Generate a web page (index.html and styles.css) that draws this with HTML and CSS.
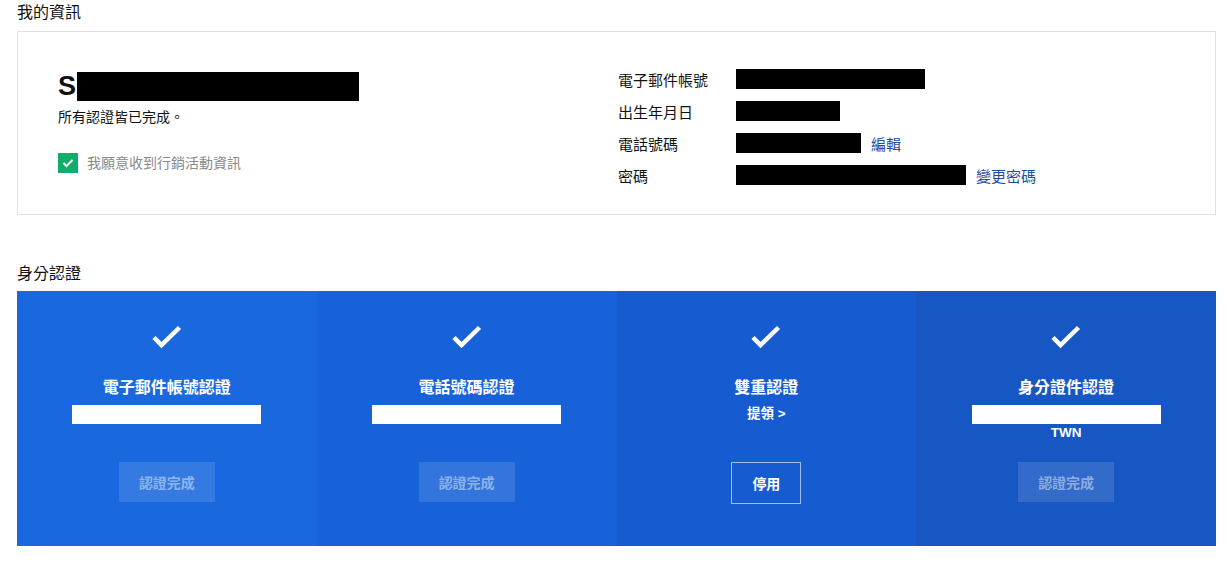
FILE: index.html
```html
<!DOCTYPE html>
<html lang="zh-Hant">
<head>
    <meta charset="UTF-8">
    <meta name="viewport" content="width=device-width, initial-scale=1.0">
    <title>我的資訊</title>
    <link rel="stylesheet" href="styles.css">
</head>
<body>

<div class="page">
    <h3 class="section-title">我的資訊</h3>
    <div class="info-box">
        <div class="info-left">
            <div class="user-name">S<span class="mask mask-name"></span></div>
            <p class="verify-note">所有認證皆已完成。</p>
            <label class="marketing">
                <span class="checkbox">
                    <svg width="12" height="10" viewBox="0 0 12 10"><path d="M1.5 5 L4.5 8 L10.5 2" fill="none" stroke="#fff" stroke-width="2"/></svg>
                </span>
                我願意收到行銷活動資訊
            </label>
        </div>
        <div class="info-right">
            <div class="info-row">
                <span class="info-label">電子郵件帳號</span>
                <span class="mask" style="width:189px"></span>
            </div>
            <div class="info-row">
                <span class="info-label">出生年月日</span>
                <span class="mask" style="width:104px"></span>
            </div>
            <div class="info-row">
                <span class="info-label">電話號碼</span>
                <span class="mask" style="width:125px"></span>
                <a class="info-link" href="#">編輯</a>
            </div>
            <div class="info-row">
                <span class="info-label">密碼</span>
                <span class="mask" style="width:230px"></span>
                <a class="info-link" href="#">變更密碼</a>
            </div>
        </div>
    </div>

    <h3 class="section-title section-title-2">身分認證</h3>
    <div class="verify-panel">
        <div class="verify-col col-1">
            <svg class="check" width="32" height="24" viewBox="0 0 32 24"><path d="M3 12.5 L10.5 20 L28.5 2.5" fill="none" stroke="#fff" stroke-width="4.5"/></svg>
            <div class="verify-title">電子郵件帳號認證</div>
            <div class="verify-detail">
                <span class="white-bar"></span>
            </div>
            <button class="btn-done">認證完成</button>
        </div>
        <div class="verify-col col-2">
            <svg class="check" width="32" height="24" viewBox="0 0 32 24"><path d="M3 12.5 L10.5 20 L28.5 2.5" fill="none" stroke="#fff" stroke-width="4.5"/></svg>
            <div class="verify-title">電話號碼認證</div>
            <div class="verify-detail">
                <span class="white-bar"></span>
            </div>
            <button class="btn-done">認證完成</button>
        </div>
        <div class="verify-col col-3">
            <svg class="check" width="32" height="24" viewBox="0 0 32 24"><path d="M3 12.5 L10.5 20 L28.5 2.5" fill="none" stroke="#fff" stroke-width="4.5"/></svg>
            <div class="verify-title">雙重認證</div>
            <div class="verify-detail">
                <a class="withdraw" href="#">提領 &gt;</a>
            </div>
            <button class="btn-outline">停用</button>
        </div>
        <div class="verify-col col-4">
            <svg class="check" width="32" height="24" viewBox="0 0 32 24"><path d="M3 12.5 L10.5 20 L28.5 2.5" fill="none" stroke="#fff" stroke-width="4.5"/></svg>
            <div class="verify-title">身分證件認證</div>
            <div class="verify-detail">
                <span class="white-bar"></span>
                <span class="country">TWN</span>
            </div>
            <button class="btn-done">認證完成</button>
        </div>
    </div>
</div>

</body>
</html>
```

FILE: styles.css
```css
body {
    font-family: 'Liberation Sans', 'Noto Sans CJK TC', sans-serif;
    background-color: #ffffff;
    color: #111111;
    margin: 0;
}
.page {
    width: 1199px;
    padding: 0 17px;
}
.section-title {
    margin: 0;
    padding-top: 3px;
    height: 28px;
    font-size: 16px;
    font-weight: normal;
    line-height: 20px;
}
.section-title-2 {
    margin-top: 47px;
    padding-top: 2px;
    height: 27px;
}
.info-box {
    display: flex;
    height: 182px;
    border: 1px solid #e2e2e2;
    padding: 0 40px;
}
.info-left {
    width: 560px;
    padding-top: 39px;
}
.user-name {
    display: flex;
    align-items: center;
    height: 30px;
    font-size: 27px;
    font-weight: bold;
    line-height: 30px;
}
.mask {
    display: inline-block;
    height: 20px;
    background-color: #000000;
}
.mask-name {
    width: 282px;
    height: 29px;
    margin-left: 1px;
}
.verify-note {
    margin: 6px 0 0;
    font-size: 14px;
    line-height: 20px;
}
.marketing {
    display: flex;
    align-items: center;
    gap: 9px;
    margin-top: 26px;
    font-size: 14px;
    line-height: 20px;
    color: #8a8a8a;
}
.checkbox {
    display: flex;
    align-items: center;
    justify-content: center;
    width: 20px;
    height: 20px;
    background-color: #10ad6b;
}
.info-right {
    padding-top: 31px;
}
.info-row {
    display: flex;
    align-items: center;
    height: 32px;
    font-size: 15px;
}
.info-label {
    width: 118px;
}
.info-link {
    margin-left: 10px;
    color: #1b4da3;
    text-decoration: none;
}
.verify-panel {
    display: flex;
    height: 255px;
}
.verify-col {
    flex: 1;
    display: flex;
    flex-direction: column;
    align-items: center;
    padding-top: 34px;
    color: #ffffff;
}
.col-1 { background-color: #1a68dd; }
.col-2 { background-color: #1862d9; }
.col-3 { background-color: #165bcf; }
.col-4 { background-color: #1657c3; }
.check {
    display: block;
}
.verify-title {
    margin-top: 28px;
    font-size: 16px;
    font-weight: bold;
    line-height: 22px;
}
.verify-detail {
    display: flex;
    flex-direction: column;
    align-items: center;
    height: 63px;
    padding-top: 6px;
    box-sizing: border-box;
}
.white-bar {
    display: block;
    width: 189px;
    height: 19px;
    background-color: #ffffff;
}
.withdraw {
    margin-top: -2px;
    color: #ffffff;
    font-size: 13.5px;
    font-weight: bold;
    line-height: 22px;
    text-decoration: none;
}
.country {
    font-size: 13.5px;
    font-weight: bold;
    line-height: 18px;
}
.btn-done {
    width: 96px;
    height: 40px;
    border: none;
    background-color: rgba(255, 255, 255, 0.12);
    color: rgba(255, 255, 255, 0.45);
    font-family: inherit;
    font-size: 14px;
    font-weight: bold;
}
.btn-outline {
    width: 70px;
    height: 42px;
    border: 1px solid rgba(255, 255, 255, 0.6);
    background: transparent;
    color: #ffffff;
    font-family: inherit;
    font-size: 14px;
    font-weight: bold;
}
```
